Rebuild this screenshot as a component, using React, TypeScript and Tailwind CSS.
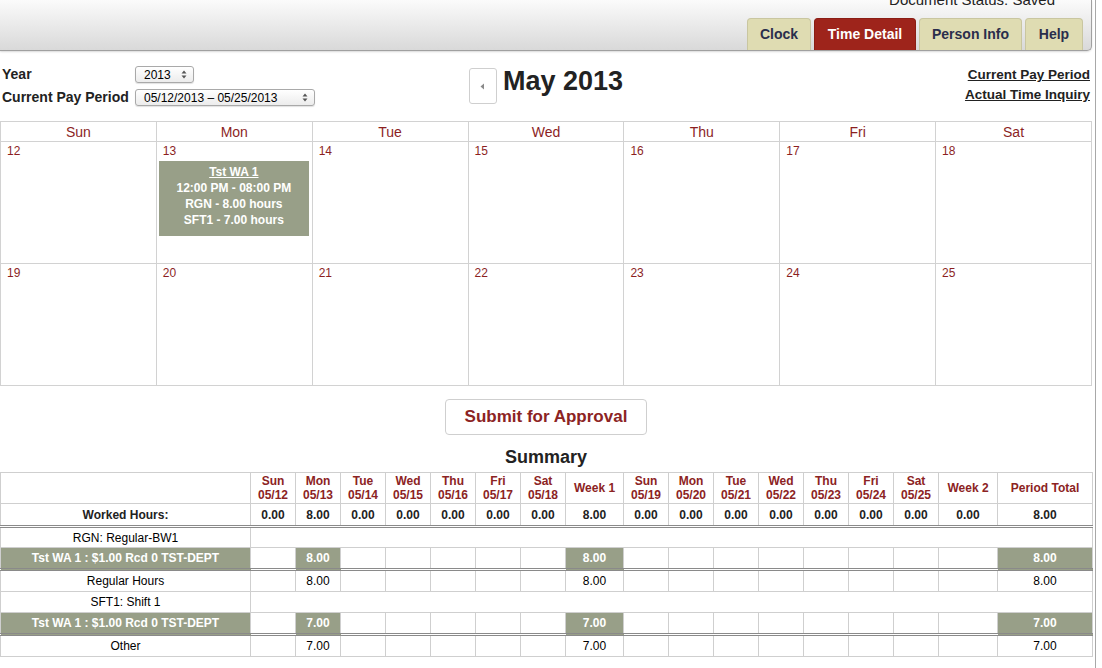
import React from 'react';

const FONT = "font-['Liberation_Sans',Arial,sans-serif]";

const tabs = [
  { label: 'Clock', w: 'w-[64px]', active: false },
  { label: 'Time Detail', w: 'w-[102px]', active: true },
  { label: 'Person Info', w: 'w-[103px]', active: false },
  { label: 'Help', w: 'w-[58px]', active: false },
];

const weekDays = ['Sun', 'Mon', 'Tue', 'Wed', 'Thu', 'Fri', 'Sat'];
const weeks = [
  [12, 13, 14, 15, 16, 17, 18],
  [19, 20, 21, 22, 23, 24, 25],
];

const summaryCols = [
  { d: 'Sun', date: '05/12' },
  { d: 'Mon', date: '05/13' },
  { d: 'Tue', date: '05/14' },
  { d: 'Wed', date: '05/15' },
  { d: 'Thu', date: '05/16' },
  { d: 'Fri', date: '05/17' },
  { d: 'Sat', date: '05/18' },
  { d: 'Week 1', date: '' },
  { d: 'Sun', date: '05/19' },
  { d: 'Mon', date: '05/20' },
  { d: 'Tue', date: '05/21' },
  { d: 'Wed', date: '05/22' },
  { d: 'Thu', date: '05/23' },
  { d: 'Fri', date: '05/24' },
  { d: 'Sat', date: '05/25' },
  { d: 'Week 2', date: '' },
  { d: 'Period Total', date: '' },
];

const colWidths = [250, 45, 45, 45, 45, 45, 45, 45, 58, 45, 45, 45, 45, 45, 45, 45, 59, 95];

const SelectBox = ({ text, className }: { text: string; className: string }) => (
  <div
    className={`flex items-center justify-between rounded-[3px] border border-[#a9a9a9] bg-gradient-to-b from-white to-[#ececec] pl-[8px] pr-[6px] text-[12px] font-normal leading-none text-black shadow-[0_1px_1px_rgba(0,0,0,0.12)] ${className}`}
  >
    <span>{text}</span>
    <svg width="6" height="9" viewBox="0 0 6 9">
      <path d="M3 0.5 L5.5 3.5 H0.5 Z" fill="#555" />
      <path d="M3 8.5 L5.5 5.5 H0.5 Z" fill="#555" />
    </svg>
  </div>
);

// one row of the summary table with values keyed by column index (1..17)
const DataRow = ({
  label,
  values,
  shaded,
  doubleBottom,
}: {
  label: string;
  values: Record<number, string>;
  shaded?: boolean;
  doubleBottom?: boolean;
}) => {
  const bottom = doubleBottom ? 'border-b-[3px] border-b-[#8a8a8a] border-double' : '';
  return (
    <tr className="h-[22px]">
      <td
        className={`border border-[#cfcfcf] text-center ${bottom} ${
          shaded ? 'bg-[#989f88] font-bold text-white' : 'text-black'
        }`}
      >
        {label}
      </td>
      {summaryCols.map((_, i) => {
        const v = values[i + 1];
        const fill = shaded && v ? 'bg-[#989f88] font-bold text-white' : 'text-black';
        return (
          <td key={i} className={`border border-[#cfcfcf] text-center ${bottom} ${fill}`}>
            {v ?? ''}
          </td>
        );
      })}
    </tr>
  );
};

const SpanRow = ({ label }: { label: string }) => (
  <tr className="h-[21px]">
    <td className="border border-[#cfcfcf] text-center text-black">{label}</td>
    <td colSpan={17} className="border border-[#cfcfcf]" />
  </tr>
);

export default function App() {
  return (
    <div className={`${FONT} relative min-h-[668px] w-[1096px] overflow-hidden border-r border-[#a8a8a8] bg-white`}>
      {/* Header bar */}
      <div className="flex h-[51px] w-[1092px] flex-col items-end justify-between rounded-br-[5px] border-b border-r border-[#a0a0a0] bg-gradient-to-b from-[#fbfbfb] to-[#d9d9d9] pr-[8px] shadow-[0_1px_2px_rgba(0,0,0,0.15)]">
        <div className="-mt-[8px] mr-[28px] text-[15px] leading-[16px] text-[#222]">Document Status: Saved</div>
        <div className="flex items-end gap-[3px]">
          {tabs.map((t) => (
            <div
              key={t.label}
              className={`flex h-[32px] items-center justify-center rounded-t-[4px] border border-b-0 text-[14px] font-bold ${t.w} ${
                t.active
                  ? 'border-[#8b1d14] bg-[#9e241b] text-white'
                  : 'border-[#c9c6a0] bg-[#dfdcb2] text-[#2a2e4c]'
              }`}
            >
              {t.label}
            </div>
          ))}
        </div>
      </div>

      {/* Controls */}
      <div className="grid h-[70px] w-[1092px] grid-cols-[1fr_auto_1fr] items-start">
        <div className="flex flex-col gap-[6px] pl-[2px] pt-[15px] text-[14px] font-bold leading-[17px] text-[#222]">
          <div className="flex items-center">
            <span className="w-[133px]">Year</span>
            <SelectBox text="2013" className="h-[17px] w-[59px]" />
          </div>
          <div className="flex items-center">
            <span className="w-[133px]">Current Pay Period</span>
            <SelectBox text="05/12/2013 – 05/25/2013" className="h-[17px] w-[180px]" />
          </div>
        </div>
        <div className="flex items-start gap-[6px] pt-[17px]">
          <div className="flex h-[36px] w-[28px] items-center justify-center rounded-[3px] border border-[#cfcfcf] bg-white">
            <svg width="5" height="7" viewBox="0 0 5 7">
              <path d="M4 0.5 V6.5 L0.5 3.5 Z" fill="#8a8a8a" />
            </svg>
          </div>
          <div className="text-[27px] font-bold leading-[26px] text-[#222]">May 2013</div>
        </div>
        <div className="flex flex-col items-end gap-[4px] pr-[2px] pt-[16px] text-[13.5px] font-bold leading-[16px] text-[#222]">
          <span className="underline">Current Pay Period</span>
          <span className="underline">Actual Time Inquiry</span>
        </div>
      </div>

      {/* Calendar */}
      <table className="w-[1092px] table-fixed border-collapse">
        <thead>
          <tr className="h-[20px]">
            {weekDays.map((d) => (
              <th key={d} className="border border-[#d2d2d2] p-0 text-[14px] font-normal leading-[18px] text-[#8c1f1f]">
                {d}
              </th>
            ))}
          </tr>
        </thead>
        <tbody>
          {weeks.map((w, wi) => (
            <tr key={wi} className="h-[122px]">
              {w.map((n) => (
                <td key={n} className="border border-[#d2d2d2] p-[2px] align-top">
                  <div className="pl-[4px] text-[12px] leading-[14px] text-[#8c1f1f]">{n}</div>
                  {n === 13 && (
                    <div className="mt-[3px] flex h-[75px] w-[150px] flex-col items-center bg-[#989f88] pt-[3px] text-[12px] font-bold leading-[16px] text-white">
                      <span className="underline">Tst WA 1</span>
                      <span>12:00 PM - 08:00 PM</span>
                      <span>RGN - 8.00 hours</span>
                      <span>SFT1 - 7.00 hours</span>
                    </div>
                  )}
                </td>
              ))}
            </tr>
          ))}
        </tbody>
      </table>

      {/* Submit */}
      <div className="flex w-[1092px] justify-center pt-[13px]">
        <button className="h-[36px] w-[202px] rounded-[4px] border border-[#cfcfcf] bg-white text-[17px] font-bold text-[#8c2323]">
          Submit for Approval
        </button>
      </div>

      {/* Summary */}
      <div className="w-[1092px] pt-[11px] text-center text-[18px] font-bold leading-[22px] text-[#222]">Summary</div>
      <table className="mt-[4px] w-[1092px] table-fixed border-collapse text-[12px]">
        <colgroup>
          {colWidths.map((w, i) => (
            <col key={i} style={{ width: w }} />
          ))}
        </colgroup>
        <tbody>
          <tr className="h-[31px]">
            <td className="border border-[#cfcfcf]" />
            {summaryCols.map((c, i) => (
              <td key={i} className="border border-[#cfcfcf] p-0 text-center font-bold leading-[14px] text-[#8c2323]">
                {c.date ? (
                  <>
                    <div>{c.d}</div>
                    <div>{c.date}</div>
                  </>
                ) : (
                  c.d
                )}
              </td>
            ))}
          </tr>
          <tr className="h-[23px]">
            <td className="border border-[#cfcfcf] border-b-[3px] border-b-[#8a8a8a] border-double text-center font-bold text-[#222]">
              Worked Hours:
            </td>
            {summaryCols.map((_, i) => (
              <td
                key={i}
                className="border border-[#cfcfcf] border-b-[3px] border-b-[#8a8a8a] border-double text-center font-bold text-[#222]"
              >
                {i === 1 || i === 7 || i === 16 ? '8.00' : '0.00'}
              </td>
            ))}
          </tr>
          <SpanRow label="RGN: Regular-BW1" />
          <DataRow label="Tst WA 1 : $1.00 Rcd 0 TST-DEPT" values={{ 2: '8.00', 8: '8.00', 17: '8.00' }} shaded doubleBottom />
          <DataRow label="Regular Hours" values={{ 2: '8.00', 8: '8.00', 17: '8.00' }} />
          <SpanRow label="SFT1: Shift 1" />
          <DataRow label="Tst WA 1 : $1.00 Rcd 0 TST-DEPT" values={{ 2: '7.00', 8: '7.00', 17: '7.00' }} shaded doubleBottom />
          <DataRow label="Other" values={{ 2: '7.00', 8: '7.00', 17: '7.00' }} />
        </tbody>
      </table>
    </div>
  );
}
